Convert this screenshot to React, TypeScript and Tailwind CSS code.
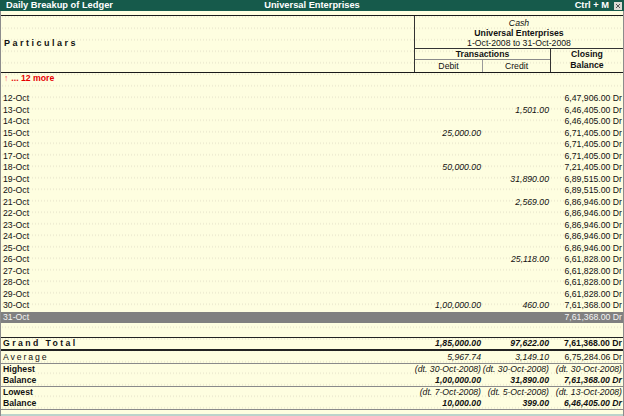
import React from 'react'

type Row = { date: string; debit?: string; credit?: string; balance: string }

const rows: Row[] = [
  { date: '12-Oct', balance: '6,47,906.00 Dr' },
  { date: '13-Oct', credit: '1,501.00', balance: '6,46,405.00 Dr' },
  { date: '14-Oct', balance: '6,46,405.00 Dr' },
  { date: '15-Oct', debit: '25,000.00', balance: '6,71,405.00 Dr' },
  { date: '16-Oct', balance: '6,71,405.00 Dr' },
  { date: '17-Oct', balance: '6,71,405.00 Dr' },
  { date: '18-Oct', debit: '50,000.00', balance: '7,21,405.00 Dr' },
  { date: '19-Oct', credit: '31,890.00', balance: '6,89,515.00 Dr' },
  { date: '20-Oct', balance: '6,89,515.00 Dr' },
  { date: '21-Oct', credit: '2,569.00', balance: '6,86,946.00 Dr' },
  { date: '22-Oct', balance: '6,86,946.00 Dr' },
  { date: '23-Oct', balance: '6,86,946.00 Dr' },
  { date: '24-Oct', balance: '6,86,946.00 Dr' },
  { date: '25-Oct', balance: '6,86,946.00 Dr' },
  { date: '26-Oct', credit: '25,118.00', balance: '6,61,828.00 Dr' },
  { date: '27-Oct', balance: '6,61,828.00 Dr' },
  { date: '28-Oct', balance: '6,61,828.00 Dr' },
  { date: '29-Oct', balance: '6,61,828.00 Dr' },
  { date: '30-Oct', debit: '1,00,000.00', credit: '460.00', balance: '7,61,368.00 Dr' },
]

function Line({
  label,
  debit,
  credit,
  balance,
  className = '',
  labelClass = '',
  numClass = 'italic',
  balClass = '',
}: {
  label?: React.ReactNode
  debit?: string
  credit?: string
  balance?: string
  className?: string
  labelClass?: string
  numClass?: string
  balClass?: string
}) {
  return (
    <div className={`flex leading-[11px] whitespace-nowrap ${className}`}>
      <div className={`w-[413px] pl-[2px] ${labelClass}`}>{label}</div>
      <div className={`w-[68px] pr-[1px] text-right ${numClass}`}>{debit}</div>
      <div className={`w-[68px] pr-[1px] text-right ${numClass}`}>{credit}</div>
      <div className={`flex-1 pr-[1px] text-right ${balClass}`}>{balance}</div>
    </div>
  )
}

export default function App() {
  return (
    <div className="w-[624px] h-[416px] flex flex-col overflow-hidden bg-[#fefee0] text-[#111] text-[8.7px] font-['Liberation_Sans',Arial,sans-serif]">
      {/* Title bar */}
      <div className="h-[11px] shrink-0 bg-[#165a4b] text-white flex items-center relative text-[9.3px] font-bold leading-none">
        <span className="pl-[6px]">Daily Breakup of Ledger</span>
        <span className="absolute left-1/2 -translate-x-1/2">Universal Enterprises</span>
        <span className="ml-auto mr-[5px]">Ctrl + M</span>
        <span className="w-[8px] h-[8px] mr-[2px] bg-[#dcdad4] flex items-center justify-center">
          <svg width="6" height="6" viewBox="0 0 6 6">
            <path d="M1 1 L5 5 M5 1 L1 5" stroke="#555" strokeWidth="1" />
          </svg>
        </span>
      </div>

      <div className="flex-1 flex flex-col border-x border-[#8c8c8c] bg-[radial-gradient(circle,#efedd2_0.55px,transparent_0.7px)] bg-[length:3px_11.5px]">
        <div className="h-[4px] shrink-0 bg-[#fefee0]" />

        {/* Header */}
        <div className="h-[58px] shrink-0 flex border-y border-[#1a1a1a]">
          <div className="w-[413px] flex items-center pl-[3px] font-bold tracking-[2.5px] text-[9px]">
            Particulars
          </div>
          <div className="flex-1 flex flex-col border-l border-[#333]">
            <div className="h-[34px] flex flex-col items-center pt-[2px] leading-[10px]">
              <span className="italic">Cash</span>
              <span className="font-bold">Universal Enterprises</span>
              <span>1-Oct-2008 to 31-Oct-2008</span>
            </div>
            <div className="flex-1 flex border-t border-[#333]">
              <div className="w-[135px] flex flex-col">
                <div className="h-[10px] flex items-center justify-center font-bold leading-none">Transactions</div>
                <div className="flex-1 flex border-t border-[#8a8a8a]">
                  <div className="w-[67px] flex items-center justify-center leading-none">Debit</div>
                  <div className="flex-1 flex items-center justify-center border-l border-[#9a9a9a] leading-none">Credit</div>
                </div>
              </div>
              <div className="flex-1 flex flex-col items-center justify-center border-l border-[#333] font-bold leading-[11px] pb-[1px]">
                <span>Closing</span>
                <span>Balance</span>
              </div>
            </div>
          </div>
        </div>

        {/* Body */}
        <div className="h-[11.5px] flex items-center pl-[3px] leading-none text-[#e60000]">
          <span className="font-normal text-[#ff5050]">↑</span>
          <span className="font-bold ml-[3px]">... 12 more</span>
        </div>
        <div className="h-[8.5px]" />
        {rows.map((r) => (
          <Line
            key={r.date}
            className="h-[11.5px] items-center"
            label={r.date}
            debit={r.debit}
            credit={r.credit}
            balance={r.balance}
          />
        ))}
        <Line
          className="h-[11.5px] items-center bg-[#808080] text-[#f4f4f4]"
          label="31-Oct"
          balance="7,61,368.00 Dr"
        />
        <div className="h-[14px]" />

        {/* Totals */}
        <Line
          className="h-[12px] items-center border-t border-[#222]"
          label="Grand Total"
          labelClass="font-bold tracking-[2.4px]"
          debit="1,85,000.00"
          credit="97,622.00"
          balance="7,61,368.00 Dr"
          numClass="italic font-bold"
          balClass="font-bold"
        />
        <Line
          className="h-[14px] items-center border-t-2 border-[#222]"
          label="Average"
          labelClass="tracking-[1.9px]"
          debit="5,967.74"
          credit="3,149.10"
          balance="6,75,284.06 Dr"
        />
        <div className="border-t border-[#8a8a8a]">
          <Line
            className="h-[11px] items-center"
            label="Highest"
            labelClass="font-bold"
            debit="(dt. 30-Oct-2008)"
            credit="(dt. 30-Oct-2008)"
            balance="(dt. 30-Oct-2008)"
            balClass="italic"
          />
          <Line
            className="h-[11px] items-center"
            label="Balance"
            labelClass="font-bold"
            debit="1,00,000.00"
            credit="31,890.00"
            balance="7,61,368.00 Dr"
            numClass="italic font-bold"
            balClass="italic font-bold"
          />
        </div>
        <div className="border-t border-[#8a8a8a]">
          <Line
            className="h-[11px] items-center"
            label="Lowest"
            labelClass="font-bold"
            debit="(dt. 7-Oct-2008)"
            credit="(dt. 5-Oct-2008)"
            balance="(dt. 13-Oct-2008)"
            balClass="italic"
          />
          <Line
            className="h-[11px] items-center"
            label="Balance"
            labelClass="font-bold"
            debit="10,000.00"
            credit="399.00"
            balance="6,46,405.00 Dr"
            numClass="italic font-bold"
            balClass="italic font-bold"
          />
        </div>
        <div className="flex-1 border-t border-[#8a8a8a] flex flex-col justify-end">
          <div className="h-[2px] bg-[#bcd3cb]" />
        </div>
      </div>
    </div>
  )
}
